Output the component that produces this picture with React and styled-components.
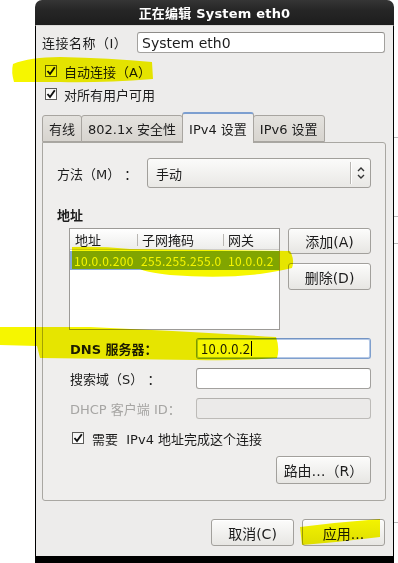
import React from 'react';
import styled, { createGlobalStyle } from 'styled-components';

const Global = createGlobalStyle`
  html, body { margin: 0; padding: 0; background: #fff; }
  body {
    font-family: "DejaVu Sans", "Noto Sans CJK SC", sans-serif;
    font-size: 13px;
    color: #1c1c1c;
  }
`;

const Page = styled.div`
  position: relative;
  display: flex;
  width: 398px;
  height: 563px;
  overflow: hidden;
  background: #fff;
`;

const LeftSpace = styled.div`
  width: 35px;
  flex: none;
`;

const RightStrip = styled.div`
  width: 4px;
  flex: none;
  display: flex;
  flex-direction: column;
`;

const StripRule = styled.div`
  height: 1px;
  background: #b9b9b9;
  margin-top: ${p => p.$gap}px;
`;

const Dialog = styled.div`
  width: 359px;
  flex: none;
  display: flex;
  flex-direction: column;
`;

const TitleBar = styled.div`
  height: 25px;
  flex: none;
  border-radius: 7px 7px 0 0;
  background: linear-gradient(#353535, #262626 40%, #1d1d1d);
  color: #fff;
  font-weight: bold;
  font-size: 13px;
  display: flex;
  align-items: center;
  justify-content: center;
  letter-spacing: 0.2px;
`;

const Body = styled.div`
  flex: 1;
  background: #edeceb;
  border-left: 1px solid #000;
  border-right: 1px solid #000;
  border-top: 1px solid #dcdbd9;
  padding: 6px 8px 0 6px;
  display: flex;
  flex-direction: column;
`;

const BottomBar = styled.div`
  height: 7px;
  flex: none;
  background: #000;
`;

const NameRow = styled.div`
  display: flex;
  align-items: center;
  height: 21px;
`;

const NameLabel = styled.div`
  width: 95px;
  flex: none;
  letter-spacing: 0.5px;
`;

const TextInput = styled.div`
  flex: 1;
  height: ${p => p.$h || 21}px;
  box-sizing: border-box;
  border: 1px solid ${p => (p.$focus ? '#7f9fcd' : p.$disabled ? '#bdbbb8' : '#a3a19e')};
  border-top-color: ${p => (p.$focus ? '#7394c4' : p.$disabled ? '#b3b1ae' : '#8e8c89')};
  border-radius: 3px;
  background: ${p => (p.$disabled ? '#ebeae9' : '#fff')};
  display: flex;
  align-items: center;
  padding: 0 4px;
  font-size: ${p => (p.$big ? 14 : 13)}px;
  box-shadow: ${p => (p.$focus ? 'inset 0 0 0 1px #b4c8e6' : 'none')};
`;

const IpText = styled.span`
  font-family: "Noto Sans CJK SC", sans-serif;
  letter-spacing: 0.3px;
`;

const CheckRow = styled.div`
  display: flex;
  align-items: center;
  height: 16px;
  margin-top: ${p => p.$mt}px;
  margin-left: ${p => p.$ml || 0}px;
  gap: ${p => p.$gap || 7}px;
  white-space: pre;
`;

const Box = styled.div`
  width: 12px;
  height: 12px;
  box-sizing: border-box;
  border: 1px solid #5b5a58;
  background: linear-gradient(#f4f4f3, #fff);
  display: flex;
  align-items: center;
  justify-content: center;
  flex: none;
`;

const Check = () => (
  <Box>
    <svg width="10" height="10" viewBox="0 0 10 10">
      <path d="M1.5 5 L4 8 L8.8 1.3" fill="none" stroke="#111" strokeWidth="1.9" />
    </svg>
  </Box>
);

const Tabs = styled.div`
  position: relative;
  z-index: 1;
  display: flex;
  align-items: flex-end;
  height: 30px;
  margin-top: 10px;
  margin-left: 1px;
`;

const Tab = styled.div`
  box-sizing: border-box;
  height: ${p => (p.$active ? 31 : 27)}px;
  margin-bottom: ${p => (p.$active ? -1 : 0)}px;
  padding: 0 6px;
  display: flex;
  align-items: ${p => (p.$active ? 'flex-start' : 'center')};
  padding-top: ${p => (p.$active ? 5 : 0)}px;
  border: 1px solid #a8a5a0;
  border-bottom: ${p => (p.$active ? 'none' : '1px solid #a8a5a0')};
  border-top: ${p => (p.$active ? '2px solid #7d9fd0' : '1px solid #a8a5a0')};
  border-radius: 3px 3px 0 0;
  background: ${p => (p.$active ? '#efeeed' : 'linear-gradient(#e4e2de, #d7d4cf)')};
  margin-left: -1px;
  white-space: nowrap;
`;

const Panel = styled.div`
  box-sizing: border-box;
  height: 359px;
  margin-right: -1px;
  border: 1px solid #a9a7a2;
  border-radius: 0 3px 3px 3px;
  background: #efeeed;
  padding: 15px 14px 0 14px;
  display: flex;
  flex-direction: column;
`;

const MethodRow = styled.div`
  display: flex;
  align-items: center;
  height: 30px;
`;

const MethodLabel = styled.div`
  width: 90px;
  flex: none;
  white-space: pre;
`;

const Combo = styled.div`
  flex: 1;
  height: 30px;
  box-sizing: border-box;
  border: 1px solid #a19f9b;
  border-radius: 3px;
  background: linear-gradient(#fbfbfa, #e9e8e5);
  display: flex;
  align-items: center;
  padding-left: 8px;
`;

const ComboText = styled.div`
  flex: 1;
`;

const ComboSep = styled.div`
  width: 1px;
  height: 22px;
  background: #b8b6b2;
  box-shadow: 1px 0 0 #fff;
`;

const ComboArrow = styled.div`
  width: 19px;
  display: flex;
  justify-content: center;
`;

const Heading = styled.div`
  font-weight: bold;
  margin-top: 20px;
  line-height: 16px;
`;

const AddressRow = styled.div`
  display: flex;
  margin-top: 4px;
  margin-left: 12px;
  gap: 8px;
`;

const List = styled.div`
  width: 211px;
  height: 102px;
  box-sizing: border-box;
  border: 1px solid #9c9a97;
  background: #fff;
  display: flex;
  flex-direction: column;
`;

const ListHead = styled.div`
  display: flex;
  height: 20px;
  flex: none;
  background: linear-gradient(#ffffff, #ededeb);
  border-bottom: 1px solid #cfcdca;
`;

const HeadCell = styled.div`
  width: ${p => p.$w}px;
  box-sizing: border-box;
  display: flex;
  align-items: center;
  padding-left: 5px;
  position: relative;
  &::before {
    content: '';
    display: ${p => (p.$sep ? 'block' : 'none')};
    position: absolute;
    left: 0;
    top: 5px;
    height: 12px;
    width: 1px;
    background: #b9b7b3;
  }
`;

const ListRow = styled.div`
  display: flex;
  height: 19px;
  margin-top: 1px;
  background: #86abd9;
  color: #fff;
  font-family: "Noto Sans CJK SC", sans-serif;
  font-size: 12px;
  letter-spacing: 0.3px;
`;

const Cell = styled.div`
  width: ${p => p.$w}px;
  box-sizing: border-box;
  padding-left: ${p => p.$pl || 4}px;
  display: flex;
  align-items: center;
  white-space: nowrap;
  overflow: hidden;
`;

const ButtonCol = styled.div`
  display: flex;
  flex-direction: column;
  gap: 9px;
`;

const Button = styled.div`
  box-sizing: border-box;
  width: ${p => p.$w}px;
  height: ${p => p.$h || 26}px;
  border: 1px solid #a2a09c;
  border-radius: 3px;
  background: linear-gradient(#fcfcfb, #e7e6e3);
  box-shadow: inset 0 1px 0 #fff;
  display: flex;
  align-items: center;
  justify-content: center;
  font-size: 14px;
  white-space: nowrap;
`;

const FormRow = styled.div`
  display: flex;
  align-items: center;
  margin-top: ${p => p.$mt}px;
  margin-left: 13px;
  height: 21px;
  color: ${p => (p.$disabled ? '#a6a5a3' : 'inherit')};
`;

const FormLabel = styled.div`
  width: 126px;
  flex: none;
  white-space: pre;
  font-weight: ${p => (p.$bold ? 600 : 'normal')};
`;

const Caret = styled.span`
  display: inline-block;
  width: 1px;
  height: 15px;
  background: #000;
  margin-left: 1px;
`;

const RouteRow = styled.div`
  display: flex;
  justify-content: flex-end;
  margin-top: 10px;
`;

const Footer = styled.div`
  display: flex;
  justify-content: flex-end;
  gap: 8px;
  margin-top: 18px;
`;

const Overlay = styled.svg`
  position: absolute;
  left: 0;
  top: 0;
  pointer-events: none;
  mix-blend-mode: multiply;
`;

const Arrows = () => (
  <svg width="8" height="14" viewBox="0 0 8 14">
    <path d="M1 5 L4 2 L7 5" fill="none" stroke="#333" strokeWidth="1.4" />
    <path d="M1 9 L4 12 L7 9" fill="none" stroke="#333" strokeWidth="1.4" />
  </svg>
);

export default function App() {
  return (
    <>
      <Global />
      <Page>
        <LeftSpace />
        <Dialog>
          <TitleBar>正在编辑 System eth0</TitleBar>
          <Body>
            <NameRow>
              <NameLabel>连接名称（I）</NameLabel>
              <TextInput $big>System eth0</TextInput>
            </NameRow>
            <CheckRow $mt={10} $ml={3}>
              <Check />
              <span>自动连接（A）</span>
            </CheckRow>
            <CheckRow $mt={7} $ml={3}>
              <Check />
              <span>对所有用户可用</span>
            </CheckRow>
            <Tabs>
              <Tab>有线</Tab>
              <Tab>802.1x 安全性</Tab>
              <Tab $active>IPv4 设置</Tab>
              <Tab>IPv6 设置</Tab>
            </Tabs>
            <Panel>
              <MethodRow>
                <MethodLabel>方法（M） ：</MethodLabel>
                <Combo>
                  <ComboText>手动</ComboText>
                  <ComboSep />
                  <ComboArrow>
                    <Arrows />
                  </ComboArrow>
                </Combo>
              </MethodRow>
              <Heading>地址</Heading>
              <AddressRow>
                <List>
                  <ListHead>
                    <HeadCell $w={67}>地址</HeadCell>
                    <HeadCell $w={86} $sep>子网掩码</HeadCell>
                    <HeadCell $w={56} $sep>网关</HeadCell>
                  </ListHead>
                  <ListRow>
                    <Cell $w={68}>10.0.0.200</Cell>
                    <Cell $w={86} $pl={3}>255.255.255.0</Cell>
                    <Cell $w={55}>10.0.0.2</Cell>
                  </ListRow>
                </List>
                <ButtonCol>
                  <Button $w={83}>添加(A)</Button>
                  <Button $w={83} $h={27}>删除(D)</Button>
                </ButtonCol>
              </AddressRow>
              <FormRow $mt={8}>
                <FormLabel $bold>DNS 服务器：</FormLabel>
                <TextInput $focus>
                  <IpText>10.0.0.2</IpText>
                  <Caret />
                </TextInput>
              </FormRow>
              <FormRow $mt={9}>
                <FormLabel>搜索域（S） ：</FormLabel>
                <TextInput />
              </FormRow>
              <FormRow $mt={9} $disabled>
                <FormLabel>DHCP 客户端 ID：</FormLabel>
                <TextInput $disabled />
              </FormRow>
              <CheckRow $mt={11} $ml={15} $gap={8}>
                <Check />
                <span>需要  IPv4 地址完成这个连接</span>
              </CheckRow>
              <RouteRow>
                <Button $w={95} $h={28}>路由…（R）</Button>
              </RouteRow>
            </Panel>
            <Footer>
              <Button $w={83} $h={27}>取消(C)</Button>
              <Button $w={83} $h={27}>应用...</Button>
            </Footer>
          </Body>
          <BottomBar />
        </Dialog>
        <RightStrip>
          <StripRule $gap={137} />
          <StripRule $gap={78} />
          <StripRule $gap={26} />
          <StripRule $gap={278} />
        </RightStrip>
        <Overlay width="398" height="563" viewBox="0 0 398 563">
          <g fill="#f6f600">
            <path d="M13 64 Q 30 57 60 57 Q 110 58 152 62 L 153 79 Q 100 83 60 82 L 14 82 Q 11 72 13 64 Z" />
            <path d="M72 247 Q 100 246 130 249 L 290 251 Q 295 260 292 268 Q 280 271 260 274 Q 220 279 170 275 Q 145 272 140 269 L 72 269 Z" />
            <path d="M0 327 L 90 327 Q 180 331 276 337 Q 280 348 277 358 Q 240 361 196 360 L 40 358 L 37 346 L 0 345 Z" />
            <path d="M300 527 Q 340 522 380 519 L 380 537 Q 340 542 302 545 Z" />
          </g>
        </Overlay>
      </Page>
    </>
  );
}
